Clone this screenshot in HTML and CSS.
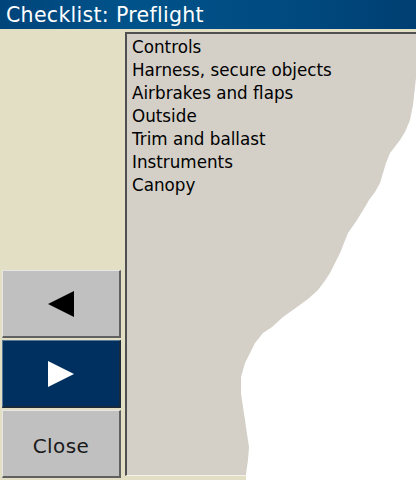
FILE: index.html
```html
<!DOCTYPE html>
<html>
<head>
<meta charset="utf-8">
<link rel="stylesheet" href="styles.css">
</head>
<body>
<div class="title">Checklist: Preflight</div>
<div class="main">
  <div class="side">
    <div class="spacer"></div>
    <div class="btn"><span class="tri tri-left"></span></div>
    <div class="btn sel"><span class="tri tri-right"></span></div>
    <div class="btn"><span class="label">Close</span></div>
  </div>
  <div class="list">
    <div class="item">Controls</div>
    <div class="item">Harness, secure objects</div>
    <div class="item">Airbrakes and flaps</div>
    <div class="item">Outside</div>
    <div class="item">Trim and ballast</div>
    <div class="item">Instruments</div>
    <div class="item">Canopy</div>
  </div>
</div>
<svg class="tear" width="416" height="480" viewBox="0 0 416 480">
  <polygon fill="#ffffff" points="416,78 415,87 413,105 410,120 405,132 400,140 394,148 390,153 386,163 383,173 380,183 375,192 369,200 365,207 357,220 348,233 344,243 340,253 335,263 330,273 324,282 318,290 308,299 297,307 283,317 272,327 263,333 255,343 250,353 245,363 241,377 241,393 243,407 245,420 247,434 249,447 248,460 247,467 246,474 246,480 416,480"/>
</svg>
</body>
</html>
```
FILE: styles.css
```css
html, body {
  margin: 0;
  padding: 0;
}
body {
  width: 416px;
  height: 480px;
  overflow: hidden;
  background: #e3dfc4;
  font-family: "DejaVu Sans", sans-serif;
  position: relative;
}
.title {
  height: 29px;
  box-sizing: border-box;
  background: linear-gradient(to right, #00447a, #00538a 30%, #004a80 70%, #003f72);
  color: #ffffff;
  font-size: 20.5px;
  line-height: 30px;
  padding-left: 6px;
  letter-spacing: 0.3px;
}
.main {
  display: flex;
  height: 451px;
}
.side {
  width: 121px;
  display: flex;
  flex-direction: column;
  padding: 0 0 2px 2px;
  box-sizing: border-box;
}
.spacer {
  flex: 1;
}
.btn {
  height: 68px;
  margin-top: 2px;
  box-sizing: border-box;
  background: #c0c0c0;
  border-top: 1px solid #e6e6e6;
  border-left: 1px solid #e6e6e6;
  border-right: 2px solid #606060;
  border-bottom: 2px solid #606060;
  display: flex;
  align-items: center;
  justify-content: center;
}
.btn.sel {
  background: #003060;
  border-top-color: #5a7896;
  border-left-color: #5a7896;
  border-right-color: #1a2a3a;
  border-bottom-color: #1a2a3a;
}
.tri {
  width: 0;
  height: 0;
  border-top: 13px solid transparent;
  border-bottom: 13px solid transparent;
}
.tri-left {
  border-right: 26px solid #000000;
}
.tri-right {
  border-left: 26px solid #ffffff;
}
.label {
  font-size: 20px;
  color: #1a1a1a;
  letter-spacing: 0.4px;
  padding-top: 4px;
}
.list {
  margin: 3px 0 4px 4px;
  flex: 1;
  background: #d4d0c8;
  border-top: 2px solid #505050;
  border-left: 2px solid #505050;
  border-bottom: 1px solid #f4f2ea;
  padding: 2px 0 0 5px;
}
.item {
  font-size: 16.75px;
  line-height: 23px;
  color: #000000;
}
.tear {
  position: absolute;
  left: 0;
  top: 0;
}
```
